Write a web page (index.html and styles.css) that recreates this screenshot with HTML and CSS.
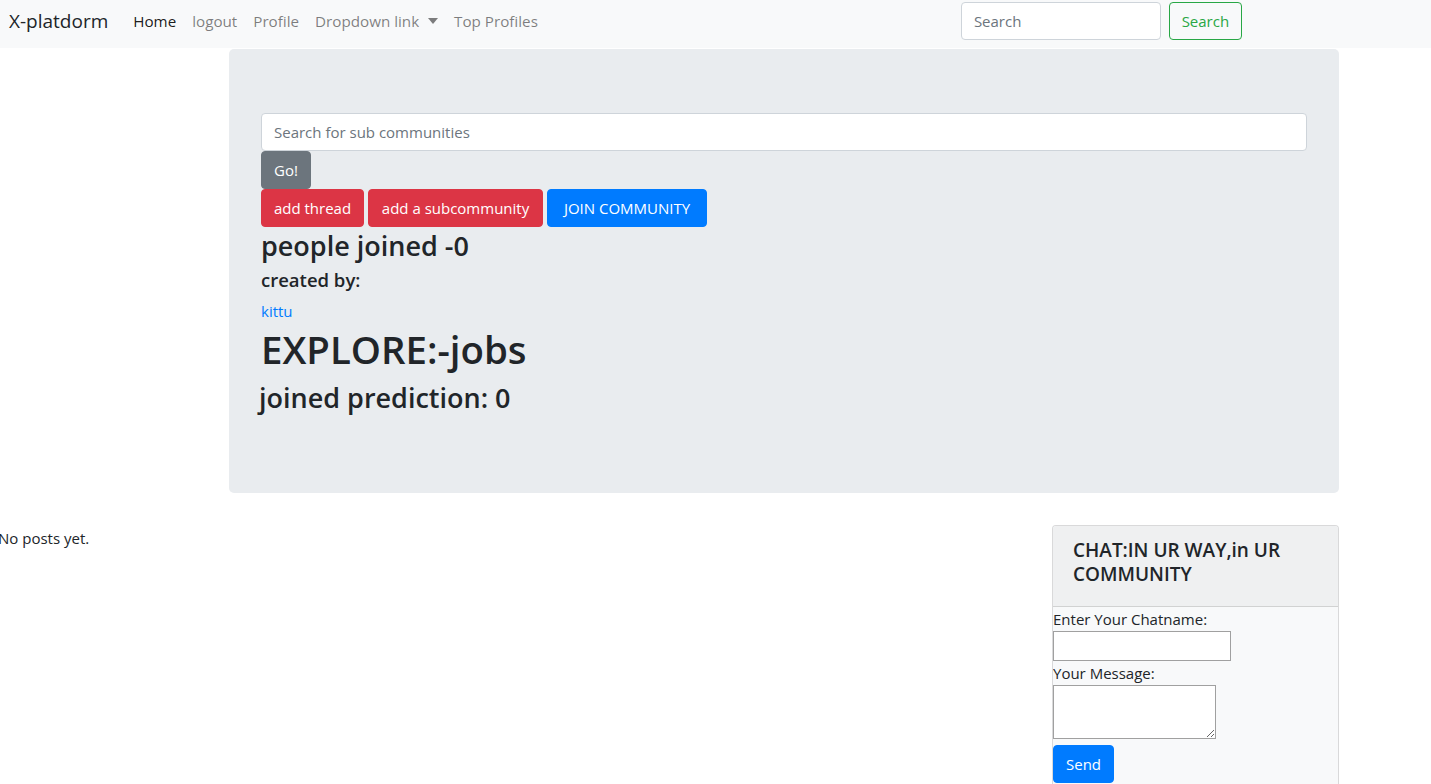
FILE: index.html
```html
<!DOCTYPE html>
<html>
<head>
<meta charset="utf-8">
<link rel="stylesheet" href="styles.css">
</head>
<body>
<nav class="navbar">
  <a class="brand" href="#">X-platdorm</a>
  <ul class="nav">
    <li><a class="nav-link active" href="#">Home</a></li>
    <li><a class="nav-link" href="#">logout</a></li>
    <li><a class="nav-link" href="#">Profile</a></li>
    <li><a class="nav-link" href="#">Dropdown link <span class="caret"></span></a></li>
    <li><a class="nav-link" href="#">Top Profiles</a></li>
  </ul>
  <form class="nav-search">
    <input class="form-control nav-input" type="text" placeholder="Search">
    <button class="btn btn-outline-success" type="button">Search</button>
  </form>
</nav>

<main class="page">
  <section class="jumbotron">
    <input class="form-control sub-search" type="text" placeholder="Search for sub communities">
    <button class="btn btn-secondary" type="button">Go!</button>
    <div class="actions">
      <button class="btn btn-danger" type="button">add thread</button>
      <button class="btn btn-danger" type="button">add a subcommunity</button>
      <button class="btn btn-primary" type="button">JOIN COMMUNITY</button>
    </div>
    <h3 class="h3 joined">people joined -0</h3>
    <h5 class="h5">created by:</h5>
    <a class="creator" href="#">kittu</a>
    <h1 class="h1">EXPLORE:-jobs</h1>
    <h3 class="h3 pred">joined prediction: 0</h3>
  </section>

  <section class="lower">
    <p class="no-posts">No posts yet.</p>
    <div class="card">
      <div class="card-header">
        <h5 class="card-title">CHAT:IN UR WAY,in UR COMMUNITY</h5>
      </div>
      <div class="card-body">
        <label class="lbl">Enter Your Chatname:</label>
        <input class="chat-input" type="text">
        <label class="lbl">Your Message:</label>
        <textarea class="chat-text"></textarea>
        <button class="btn btn-primary send" type="button">Send</button>
      </div>
    </div>
  </section>
</main>
</body>
</html>
```

FILE: styles.css
```css
* { box-sizing: border-box; }
html, body { margin: 0; padding: 0; }
body {
  font-family: "Open Sans", "Noto Sans", sans-serif;
  font-size: 15px;
  line-height: 24px;
  color: #212529;
  background: #fff;
  overflow: hidden;
}
a { text-decoration: none; }

.navbar {
  display: flex;
  align-items: flex-start;
  height: 48px;
  background: #f8f9fa;
  padding: 2px 0 0 9px;
}
.brand {
  font-size: 19px;
  line-height: 38px;
  color: #212529;
  margin-right: 17px;
}
.nav {
  display: flex;
  list-style: none;
  margin: 0;
  padding: 0;
}
.nav-link {
  display: block;
  padding: 0 8px;
  font-size: 15.2px;
  line-height: 38px;
  color: rgba(0,0,0,.5);
}
.nav-link.active { color: rgba(0,0,0,.9); }
.caret {
  display: inline-block;
  width: 0; height: 0;
  margin-left: 5px;
  vertical-align: 3px;
  border-top: 6px solid rgba(0,0,0,.5);
  border-left: 5px solid transparent;
  border-right: 5px solid transparent;
}
.nav-search {
  display: flex;
  gap: 8px;
  margin-left: 415px;
}
.form-control {
  display: block;
  height: 38px;
  padding: 6px 12px;
  font: inherit;
  color: #495057;
  background: #fff;
  border: 1px solid #ced4da;
  border-radius: 4px;
}
.form-control::placeholder { color: #6c757d; }
.nav-input { width: 200px; }

.btn {
  display: inline-block;
  height: 38px;
  padding: 6px 0;
  text-align: center;
  font: inherit;
  line-height: 24px;
  border: 1px solid transparent;
  border-radius: 4px;
  color: #fff;
  cursor: pointer;
}
.btn-outline-success {
  color: #28a745;
  border-color: #28a745;
  background: transparent;
  width: 73px;
}
.btn-secondary { background: #6c757d; border-color: #6c757d; width: 50px; }
.btn-danger { background: #dc3545; border-color: #dc3545; }
.btn-primary { background: #007bff; border-color: #007bff; }

.page { padding-top: 1px; }
.jumbotron {
  margin-left: 229px;
  width: 1110px;
  background: #e9ecef;
  border-radius: 5px;
  padding: 64px 32px 64px 32px;
  height: 444px;
}
.sub-search { width: 100%; }
.actions { display: flex; gap: 4px; }
.actions .btn-danger:first-child { width: 103px; }
.actions .btn-danger:nth-child(2) { width: 175px; }
.actions .btn-primary { width: 160px; }

.h3, .h5, .h1 { margin: 0; font-weight: 600; }
.h3 { font-size: 27px; line-height: 34px; margin-bottom: 4px; }
.joined { margin-top: 2px; }
.h5 { font-size: 18.5px; line-height: 26px; margin-top: 4px; margin-bottom: 6px; }
.creator { display: block; color: #007bff; font-size: 15px; line-height: 24px; margin-top: 3px; margin-bottom: 4px; }
.h1 { font-size: 38.4px; line-height: 48px; font-weight: 600; margin-top: -2px; margin-bottom: 8px; }
.pred { margin-left: -2px; }

.lower {
  display: flex;
  justify-content: space-between;
  width: 1341px;
  margin-left: -2px;
  margin-top: 32px;
}
.no-posts { margin: 1px 0 0 0; }
.card {
  width: 287px;
  height: 280px;
  border: 1px solid rgba(0,0,0,.125);
  border-radius: 4px;
  background: #f8f9fa;
  overflow: hidden;
}
.card-header {
  background: #eff0f1;
  border-bottom: 1px solid rgba(0,0,0,.125);
  padding: 12px 20px;
}
.card-title {
  margin: 0 0 8px 0;
  font-size: 19px;
  line-height: 24px;
  font-weight: 600;
}
.card-body { padding: 0; }
.lbl { display: block; line-height: 24px; }
.chat-input {
  display: block;
  width: 178px;
  height: 30px;
  border: 1px solid #a0a0a0;
  border-radius: 0;
  font: inherit;
}
.chat-text {
  display: block;
  width: 163px;
  height: 54px;
  border: 1px solid #a0a0a0;
  font: inherit;
  margin-bottom: 6px;
}
.send { width: 61px; }
```
